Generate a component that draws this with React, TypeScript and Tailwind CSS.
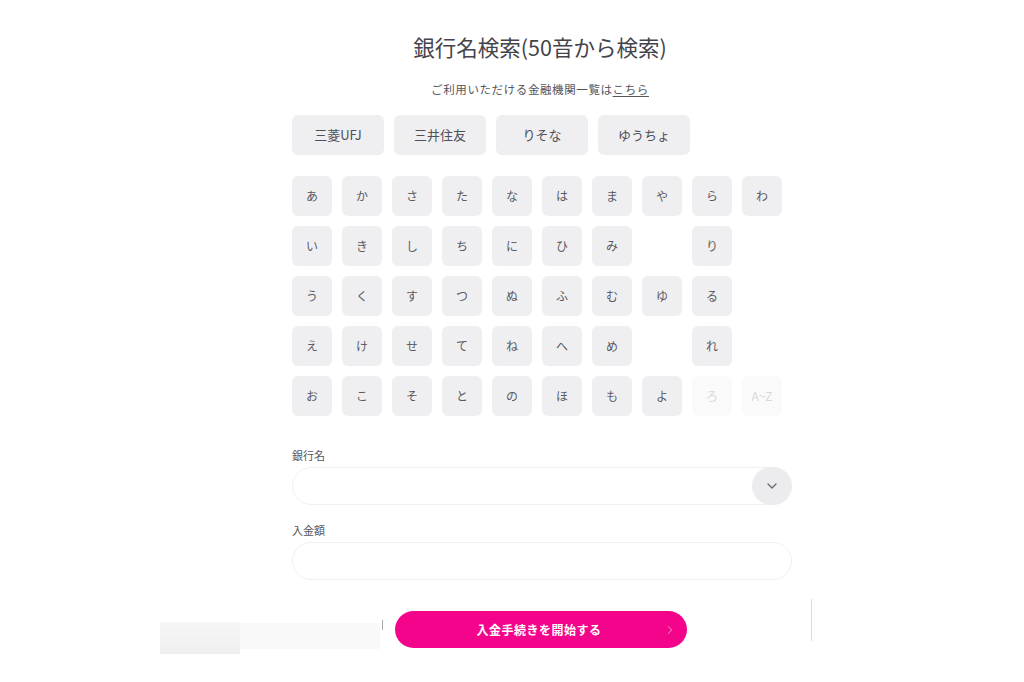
import { ChevronDown, ChevronRight } from 'lucide-react'

const banks = ['三菱UFJ', '三井住友', 'りそな', 'ゆうちょ']

// kana grid laid out row by row, null = empty cell
const rows: (string | null)[][] = [
  ['あ', 'か', 'さ', 'た', 'な', 'は', 'ま', 'や', 'ら', 'わ'],
  ['い', 'き', 'し', 'ち', 'に', 'ひ', 'み', null, 'り', null],
  ['う', 'く', 'す', 'つ', 'ぬ', 'ふ', 'む', 'ゆ', 'る', null],
  ['え', 'け', 'せ', 'て', 'ね', 'へ', 'め', null, 'れ', null],
  ['お', 'こ', 'そ', 'と', 'の', 'ほ', 'も', 'よ', 'ろ', 'A~Z'],
]

const disabled = ['ろ', 'A~Z']

export default function App() {
  return (
    <div
      className="w-[1024px] h-[682px] bg-white overflow-hidden text-[#3c3c44]"
      style={{ fontFamily: '"Noto Sans CJK JP", "Noto Sans", sans-serif' }}
    >
      <div className="ml-[292px] w-[500px] pt-[33px]">
        {/* Title */}
        <h1 className="text-center text-[21.5px] leading-[28px] font-normal text-[#44444c] -ml-[4px]">
          銀行名検索(50音から検索)
        </h1>
        <p className="mt-[20px] text-center text-[11.5px] leading-[16px] tracking-[0.6px] text-[#55555c] -ml-[4px]">
          ご利用いただける金融機関一覧は<span className="underline underline-offset-2">こちら</span>
        </p>

        {/* Major banks */}
        <div className="mt-[18px] flex gap-[10px]">
          {banks.map((b) => (
            <button
              key={b}
              className="w-[92px] h-[40px] rounded-[6px] bg-[#efeff1] text-[13px] text-[#50505a]"
            >
              {b}
            </button>
          ))}
        </div>

        {/* 50音 grid */}
        <div className="mt-[21px] grid grid-cols-[repeat(10,40px)] gap-[10px]">
          {rows.flat().map((k, i) =>
            k ? (
              <button
                key={i}
                className={
                  disabled.includes(k)
                    ? 'w-[40px] h-[40px] rounded-[6px] bg-[#fafafb] text-[12px] text-[#d8d8dc]'
                    : 'w-[40px] h-[40px] rounded-[6px] bg-[#efeff1] text-[12px] text-[#5a5a62]'
                }
              >
                {k}
              </button>
            ) : (
              <div key={i} className="w-[40px] h-[40px]" />
            )
          )}
        </div>

        {/* Bank name select */}
        <label className="block mt-[32px] text-[11px] leading-[14px] text-[#55555c]">銀行名</label>
        <div className="mt-[5px] h-[38px] rounded-full border border-[#f1f1f3] flex items-center justify-end">
          <div className="w-[40px] h-[38px] -mr-[1px] rounded-full bg-[#ececee] flex items-center justify-center">
            <ChevronDown className="w-[16px] h-[16px] text-[#6a6a72]" strokeWidth={2} />
          </div>
        </div>

        {/* Amount */}
        <label className="block mt-[18px] text-[11px] leading-[14px] text-[#55555c]">入金額</label>
        <div className="mt-[5px] h-[38px] rounded-full border border-[#f1f1f3]" />
      </div>

      {/* Submit row */}
      <div className="mt-[31px] pl-[160px] flex items-start">
        <div className="mt-[11px] w-[80px] h-[32px] bg-gradient-to-b from-[#f6f6f6] to-[#efefef]" />
        <div className="mt-[12px] w-[140px] h-[26px] bg-[#f9f9f9]" />
        <div className="mt-[9px] ml-[2px] w-px h-[10px] bg-[#a6a6ac]" />
        <button className="ml-[12px] w-[292px] h-[37px] rounded-full bg-[#f4048b] text-white text-[12px] font-bold tracking-[0.5px] flex items-center relative">
          <span className="flex-1 text-center -ml-[4px]">入金手続きを開始する</span>
          <ChevronRight className="absolute right-[10px] w-[14px] h-[14px] text-[#f9a3d0]" strokeWidth={1.6} />
        </button>
        <div className="-mt-[12px] ml-[124px] w-px h-[42px] bg-[#dcdcdc]" />
      </div>
    </div>
  )
}
